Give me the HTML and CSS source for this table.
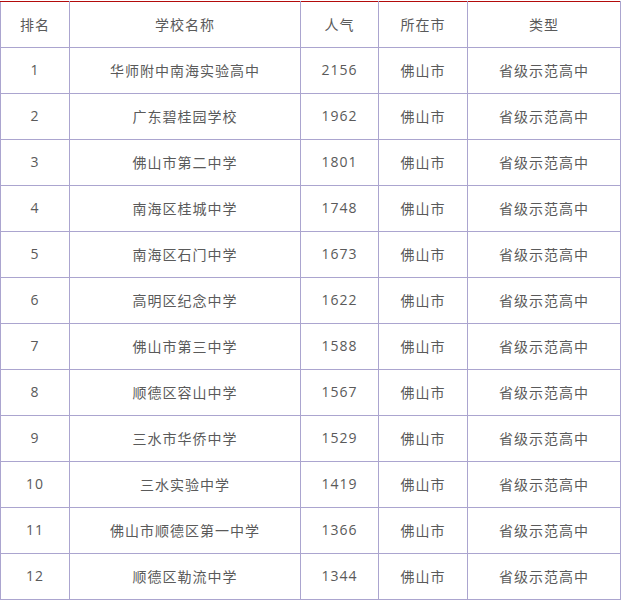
FILE: index.html
```html
<!DOCTYPE html>
<html lang="zh">
<head>
<meta charset="utf-8">
<link rel="stylesheet" href="styles.css">
</head>
<body>
<div class="wrap">
<table class="rank">
<colgroup>
<col class="c1"><col class="c2"><col class="c3"><col class="c4"><col class="c5">
</colgroup>
<thead>
<tr><th>排名</th><th>学校名称</th><th>人气</th><th>所在市</th><th>类型</th></tr>
</thead>
<tbody>
<tr><td>1</td><td>华师附中南海实验高中</td><td>2156</td><td>佛山市</td><td>省级示范高中</td></tr>
<tr><td>2</td><td>广东碧桂园学校</td><td>1962</td><td>佛山市</td><td>省级示范高中</td></tr>
<tr><td>3</td><td>佛山市第二中学</td><td>1801</td><td>佛山市</td><td>省级示范高中</td></tr>
<tr><td>4</td><td>南海区桂城中学</td><td>1748</td><td>佛山市</td><td>省级示范高中</td></tr>
<tr><td>5</td><td>南海区石门中学</td><td>1673</td><td>佛山市</td><td>省级示范高中</td></tr>
<tr><td>6</td><td>高明区纪念中学</td><td>1622</td><td>佛山市</td><td>省级示范高中</td></tr>
<tr><td>7</td><td>佛山市第三中学</td><td>1588</td><td>佛山市</td><td>省级示范高中</td></tr>
<tr><td>8</td><td>顺德区容山中学</td><td>1567</td><td>佛山市</td><td>省级示范高中</td></tr>
<tr><td>9</td><td>三水市华侨中学</td><td>1529</td><td>佛山市</td><td>省级示范高中</td></tr>
<tr><td>10</td><td>三水实验中学</td><td>1419</td><td>佛山市</td><td>省级示范高中</td></tr>
<tr><td>11</td><td>佛山市顺德区第一中学</td><td>1366</td><td>佛山市</td><td>省级示范高中</td></tr>
<tr><td>12</td><td>顺德区勒流中学</td><td>1344</td><td>佛山市</td><td>省级示范高中</td></tr>
</tbody>
</table>
</div>
</body>
</html>
```
FILE: styles.css
```css
html, body {
  margin: 0;
  padding: 0;
  background: #ffffff;
}
.wrap {
  padding-top: 1px;
}
.rank {
  border-collapse: collapse;
  table-layout: fixed;
  width: 620px;
  font-family: "Open Sans", "Noto Sans CJK SC", sans-serif;
  font-size: 14px;
  letter-spacing: 1px;
  color: #5a5a5a;
}
.c1 { width: 69px; }
.c2 { width: 231px; }
.c3 { width: 78px; }
.c4 { width: 89px; }
.c5 { width: 153px; }
.rank th, .rank td {
  border: 1px solid #aba5cf;
  text-align: center;
  padding: 0 0 2px 0;
  font-weight: normal;
}
.rank th {
  border-top: 1px solid #b30b0b;
}
.rank tr {
  height: 46px;
}
```
